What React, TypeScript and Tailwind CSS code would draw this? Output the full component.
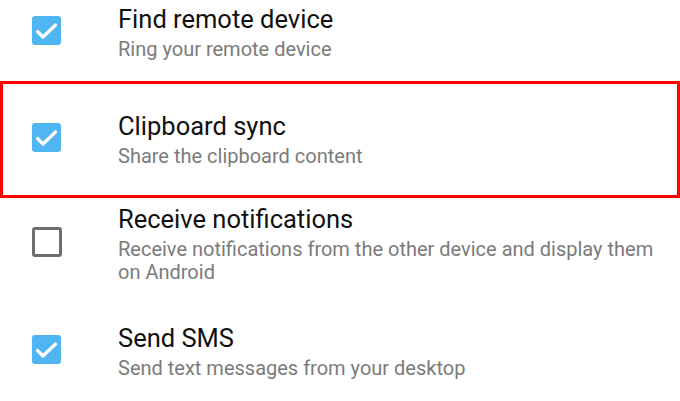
const rows = [
  {
    title: "Find remote device",
    sub: "Ring your remote device",
    checked: true,
    pad: "pt-[4px] pb-[20px]",
    boxed: false,
  },
  {
    title: "Clipboard sync",
    sub: "Share the clipboard content",
    checked: true,
    pad: "pt-[27px] pb-[27px]",
    boxed: true,
  },
  {
    title: "Receive notifications",
    sub: "Receive notifications from the other device and display them on Android",
    checked: false,
    pad: "pt-[6px] pb-[19px]",
    boxed: false,
  },
  {
    title: "Send SMS",
    sub: "Send text messages from your desktop",
    checked: true,
    pad: "pt-[20px] pb-[20px]",
    boxed: false,
  },
];

const CheckBox = ({ checked }: { checked: boolean }) =>
  checked ? (
    <svg width="29" height="29" viewBox="0 0 29 29" className="shrink-0 mb-[4px]">
      <rect x="0" y="0" width="29" height="29" rx="3" fill="#4fb6f1" />
      <path
        d="M5.5 15.5 L11 21 L23.5 9"
        fill="none"
        stroke="#ffffff"
        strokeWidth="3.2"
        strokeLinecap="round"
        strokeLinejoin="round"
      />
    </svg>
  ) : (
    <div className="w-[30px] h-[30px] shrink-0 mb-[4px] rounded-[3px] border-[3px] border-[#6e6e6e] bg-white" />
  );

const SettingRow = ({
  title,
  sub,
  checked,
  pad,
  boxed,
}: (typeof rows)[number]) => (
  <div
    className={`flex items-center ${pad} ${
      boxed ? "border-[3px] border-[#ff0000] pl-[29px]" : "pl-[32px]"
    }`}
  >
    <CheckBox checked={checked} />
    <div className={`flex flex-col ${checked ? "ml-[57px]" : "ml-[56px]"} pr-[20px]`}>
      <span className="text-[25.5px] leading-[30px] text-[#111111]">{title}</span>
      <span className="mt-[4px] text-[20px] leading-[23px] text-[#7b7b7b]">{sub}</span>
    </div>
  </div>
);

export default function App() {
  return (
    <div
      className="w-[680px] h-[401px] overflow-hidden bg-white flex flex-col"
      style={{ fontFamily: "Roboto, 'Noto Sans', sans-serif" }}
    >
      {rows.map((r) => (
        <SettingRow key={r.title} {...r} />
      ))}
    </div>
  );
}
